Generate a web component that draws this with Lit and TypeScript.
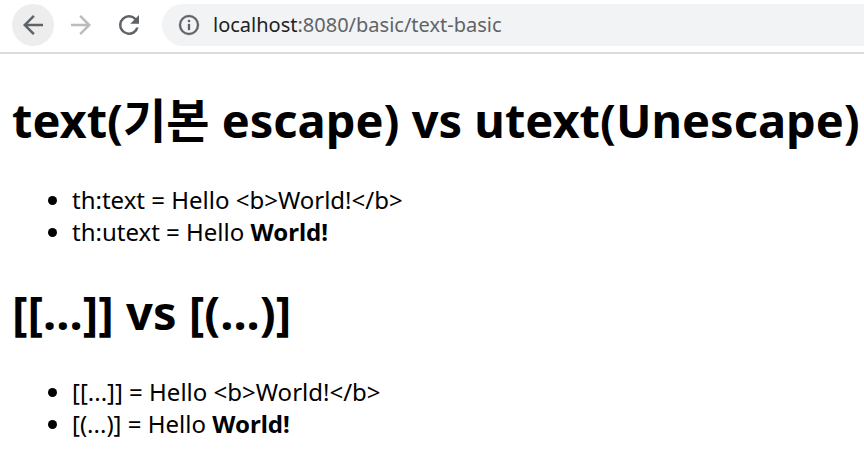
import { LitElement, html, css, svg } from "lit";
import { customElement, property } from "lit/decorators.js";

const icon = (size: number, body: unknown) => html`<svg
  width=${size}
  height=${size}
  viewBox="0 0 24 24"
  fill="currentColor"
  aria-hidden="true"
>${body}</svg>`;

const backIcon = svg`<path d="M20 11H7.83l5.59-5.59L12 4l-8 8 8 8 1.41-1.41L7.83 13H20v-2z"/>`;
const forwardIcon = svg`<path d="M12 4l-1.41 1.41L16.17 11H4v2h12.17l-5.58 5.59L12 20l8-8z"/>`;
const reloadIcon = svg`<path d="M17.65 6.35A7.96 7.96 0 0 0 12 4a8 8 0 1 0 7.73 10h-2.08A6 6 0 1 1 12 6c1.66 0 3.14.69 4.22 1.78L13 11h7V4l-2.35 2.35z"/>`;
const infoIcon = svg`<path stroke="currentColor" stroke-width="0.3" d="M11 7h2v2h-2zm0 4h2v6h-2zm1-9a10 10 0 1 0 0 20 10 10 0 0 0 0-20zm0 18a8 8 0 1 1 0-16 8 8 0 0 1 0 16z"/>`;

@customElement("browser-bar")
export class BrowserBar extends LitElement {
  @property() host = "";
  @property() path = "";

  static styles = css`
    :host {
      display: flex;
      align-items: center;
      gap: 6px;
      padding: 4px 0 6px 12px;
      border-bottom: 2px solid #dcdcdc;
      background: #fff;
    }
    button {
      display: grid;
      place-items: center;
      flex: none;
      padding: 0;
      border: 0;
      background: none;
      color: #5f6368;
    }
    svg {
      display: block;
    }
    .nav {
      width: 42px;
      height: 42px;
      border-radius: 50%;
    }
    .nav:disabled {
      color: #babcbe;
    }
    .active {
      background: #ededed;
    }
    .address {
      display: flex;
      align-items: center;
      flex: 1;
      min-width: 0;
      height: 42px;
      margin-left: 6px;
      padding-left: 15px;
      border-radius: 21px 0 0 21px;
      background: #f1f3f4;
      font: 20px/30px "Noto Sans", "Noto Sans CJK KR", sans-serif;
      color: #202124;
    }
    .info {
      margin-right: 12px;
    }
    input {
      flex: 1;
      min-width: 0;
      padding: 0;
      border: 0;
      outline: 0;
      background: none;
      font: inherit;
      color: #5f6368;
    }
  `;

  render() {
    return html`
      <button class="nav active" aria-label="Back">${icon(30, backIcon)}</button>
      <button class="nav" aria-label="Forward" disabled>${icon(30, forwardIcon)}</button>
      <button class="nav" aria-label="Reload">${icon(30, reloadIcon)}</button>
      <div class="address">
        <button class="info" aria-label="Site information">${icon(24, infoIcon)}</button>
        <label for="url">${this.host}</label>
        <input id="url" type="text" spellcheck="false" .value=${this.path} />
      </div>
    `;
  }
}

@customElement("app-root")
export class AppRoot extends LitElement {
  static styles = css`
    :host {
      display: block;
      background: #fff;
      color: #000;
      font: 24px/32px "Noto Sans", "Noto Sans CJK KR", sans-serif;
    }
    main {
      padding: 2px 0 0 12px;
    }
    h1 {
      margin: 32px 0;
      font-size: 47px;
      line-height: 64px;
      font-weight: 700;
    }
    ul {
      margin: 32px 0;
      padding-left: 60px;
    }
  `;

  render() {
    return html`
      <browser-bar host="localhost" path=":8080/basic/text-basic"></browser-bar>
      <main>
        <h1>text(기본 escape) vs utext(Unescape)</h1>
        <ul>
          <li>th:text = Hello &lt;b&gt;World!&lt;/b&gt;</li>
          <li>th:utext = Hello <b>World!</b></li>
        </ul>
        <h1>[[...]] vs [(...)]</h1>
        <ul>
          <li>[[...]] = Hello &lt;b&gt;World!&lt;/b&gt;</li>
          <li>[(...)] = Hello <b>World!</b></li>
        </ul>
      </main>
    `;
  }
}
